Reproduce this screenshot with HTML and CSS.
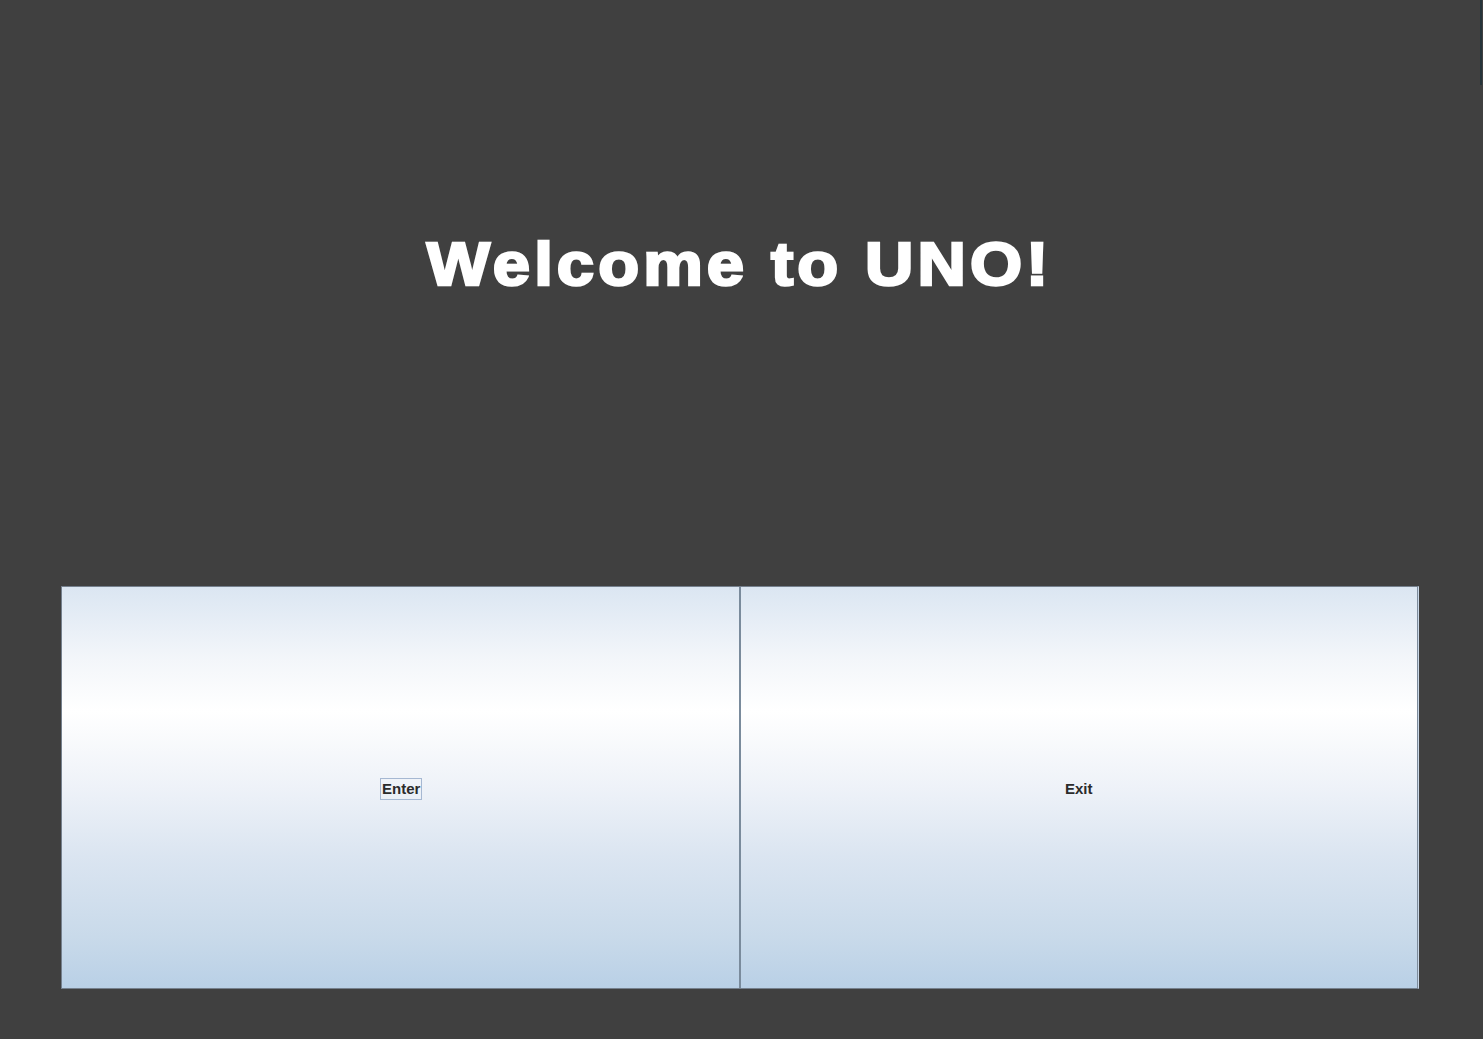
FILE: index.html
```html
<!DOCTYPE html>
<html>
<head>
<meta charset="utf-8">
<link rel="stylesheet" href="styles.css">
</head>
<body>
<div class="frame">
  <header class="hero">
    <h1 class="title">Welcome to UNO!</h1>
  </header>
  <div class="buttons">
    <button class="btn"><span class="label focused">Enter</span></button>
    <button class="btn"><span class="label">Exit</span></button>
  </div>
  <div class="edge"></div>
</div>
</body>
</html>
```

FILE: styles.css
```css
html, body {
  margin: 0;
  padding: 0;
  background: #404040;
  width: 1483px;
  height: 1039px;
  overflow: hidden;
}
.frame {
  position: relative;
  height: 1039px;
  display: flex;
  flex-direction: column;
}
.hero {
  height: 586px;
  display: flex;
  justify-content: center;
}
.title {
  margin: 224px 0 0 0;
  height: 80px;
  font-family: "Liberation Sans", Arial, sans-serif;
  font-weight: bold;
  font-size: 62px;
  line-height: 80px;
  letter-spacing: 3.8px;
  color: #ffffff;
  -webkit-text-stroke: 2.6px #ffffff;
  padding-right: 3px;
  transform: scaleX(1.08);
  transform-origin: 50% 50%;
}
.buttons {
  margin-left: 61px;
  width: 1358px;
  height: 403px;
  display: flex;
  box-sizing: border-box;
  border: 1px solid #75808d;
  border-right-color: #c8d6e6;
}
.btn {
  flex: 1;
  margin: 0;
  padding: 0;
  border: none;
  display: flex;
  align-items: center;
  justify-content: center;
  background: linear-gradient(to bottom, #dbe6f2 0%, #f3f6fa 18%, #ffffff 31%, #eef2f8 50%, #dbe5f1 67%, #c9daea 87%, #b9d0e6 100%);
  font-family: "Liberation Sans", Arial, sans-serif;
  font-weight: bold;
  font-size: 15px;
  color: #2b2b2b;
  padding-top: 2px;
}
.btn + .btn {
  border-left: 2px solid #7a8b9c;
  border-right: 1px solid #7d8c9c;
}
.label {
  display: inline-block;
  line-height: 20px;
  padding: 0 1px;
  border: 1px solid transparent;
}
.label.focused {
  border-color: #a6b8d2;
  margin-left: 2px;
}
.edge {
  position: absolute;
  right: 1px;
  top: 0;
  width: 2px;
  height: 85px;
  background: #26343a;
}
```
